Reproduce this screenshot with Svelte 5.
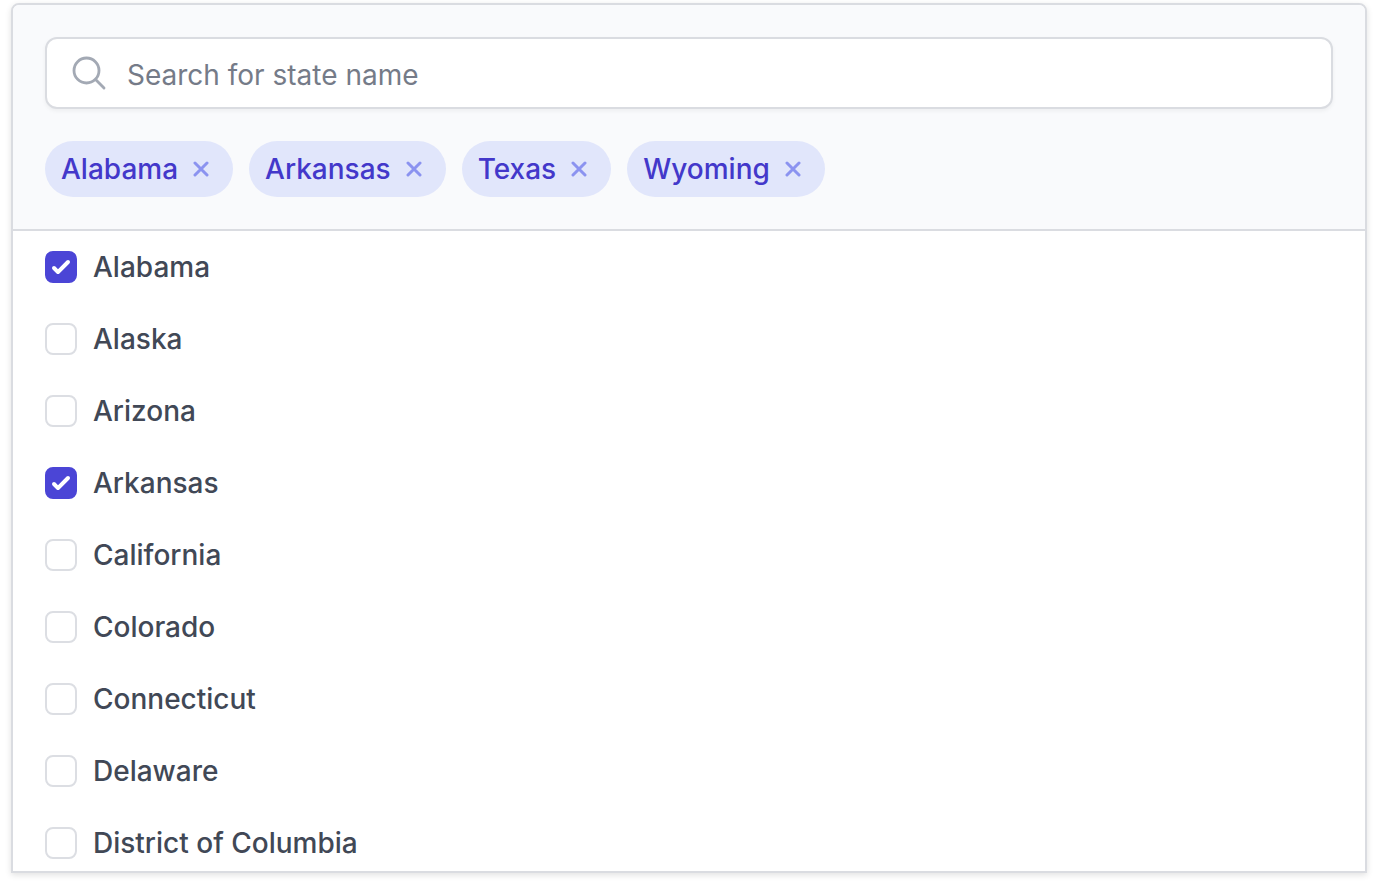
<script lang="ts">
  const states: string[] = [
    'Alabama',
    'Alaska',
    'Arizona',
    'Arkansas',
    'California',
    'Colorado',
    'Connecticut',
    'Delaware',
    'District of Columbia',
  ];

  let query = $state('');
  let selected = $state<string[]>(['Alabama', 'Arkansas', 'Texas', 'Wyoming']);

  let visibleStates = $derived(
    states.filter((name) => name.toLowerCase().includes(query.trim().toLowerCase()))
  );

  function remove(name: string) {
    selected = selected.filter((item) => item !== name);
  }
</script>

<div class="panel">
  <div class="header">
    <label class="search">
      <svg class="search-icon" viewBox="0 0 24 24" fill="none" stroke="currentColor" aria-hidden="true">
        <path
          d="M21 21l-5.197-5.197m0 0A7.5 7.5 0 105.196 5.196a7.5 7.5 0 0010.607 10.607z"
          stroke-width="1.7"
          stroke-linecap="round"
          stroke-linejoin="round"
        />
      </svg>
      <input
        type="text"
        bind:value={query}
        placeholder="Search for state name"
        aria-label="Search for state name"
      />
    </label>

    <div class="chips">
      {#each selected as name (name)}
        <span class="chip">
          {name}
          <button type="button" aria-label="Remove {name}" onclick={() => remove(name)}>
            <svg viewBox="0 0 8 8" fill="none" stroke="currentColor" aria-hidden="true">
              <path d="M1 1l6 6m0-6L1 7" stroke-width="1.5" stroke-linecap="round" />
            </svg>
          </button>
        </span>
      {/each}
    </div>
  </div>

  <div class="list">
    {#each visibleStates as name (name)}
      <label class="option">
        <input type="checkbox" value={name} bind:group={selected} />
        <span>{name}</span>
      </label>
    {/each}
  </div>
</div>

<style>
  :global(body) {
    background: #ffffff;
  }

  .panel {
    box-sizing: border-box;
    margin: 3px 7px 12px 11px;
    overflow: hidden;
    font-family: Inter, sans-serif;
    font-size: 28px;
    line-height: 40px;
    background: #ffffff;
    border: 2px solid #dadce1;
    border-radius: 8px 8px 0 0;
    box-shadow: 0 2px 6px rgba(0, 0, 0, 0.12);
  }

  .header {
    display: flex;
    flex-direction: column;
    gap: 32px;
    padding: 32px;
    background: #f9fafc;
    border-bottom: 2px solid #dadce1;
  }

  .search {
    box-sizing: border-box;
    display: flex;
    align-items: center;
    gap: 18px;
    height: 72px;
    padding: 0 22px;
    background: #ffffff;
    border: 2px solid #dadce1;
    border-radius: 12px;
    box-shadow: 0 2px 4px rgba(0, 0, 0, 0.05);
  }

  .search-icon {
    flex: none;
    width: 40px;
    height: 40px;
    color: #a3a9b4;
  }

  .search input {
    flex: 1;
    min-width: 0;
    padding: 4px 0 0;
    font: inherit;
    color: #374151;
    background: transparent;
    border: 0;
    outline: none;
  }

  .search input::placeholder {
    color: #757b88;
    opacity: 1;
  }

  .chips {
    display: flex;
    flex-wrap: wrap;
    gap: 16px;
  }

  .chip {
    display: inline-flex;
    align-items: center;
    gap: 7px;
    padding: 8px 16px;
    font-weight: 500;
    color: #4338ca;
    background: #e1e6fb;
    border-radius: 28px;
  }

  .chip button {
    display: flex;
    align-items: center;
    justify-content: center;
    width: 32px;
    height: 32px;
    padding: 0;
    color: #8b93f0;
    background: transparent;
    border: 0;
    border-radius: 50%;
    cursor: pointer;
  }

  .chip button:hover {
    background: #c7d2fe;
  }

  .chip svg {
    width: 16px;
    height: 16px;
  }

  .list {
    max-height: 640px;
    overflow-y: auto;
    scrollbar-width: none;
  }

  .option {
    display: flex;
    align-items: center;
    gap: 16px;
    padding: 16px 32px;
    font-weight: 500;
    color: #414856;
    cursor: pointer;
  }

  .option input {
    appearance: none;
    flex: none;
    box-sizing: border-box;
    width: 32px;
    height: 32px;
    margin: 0;
    background: #ffffff;
    border: 2px solid #dcdee3;
    border-radius: 8px;
    cursor: pointer;
  }

  .option input:checked {
    background-color: #4b45d6;
    background-image: url("data:image/svg+xml,%3Csvg viewBox='0 0 16 16' fill='white' xmlns='http://www.w3.org/2000/svg'%3E%3Cpath d='M12.207 4.793a1 1 0 010 1.414l-5 5a1 1 0 01-1.414 0l-2-2a1 1 0 011.414-1.414L6.5 9.086l4.293-4.293a1 1 0 011.414 0z'/%3E%3C/svg%3E");
    background-position: center;
    background-size: 32px 32px;
    background-repeat: no-repeat;
    border-color: #4b45d6;
  }
</style>
